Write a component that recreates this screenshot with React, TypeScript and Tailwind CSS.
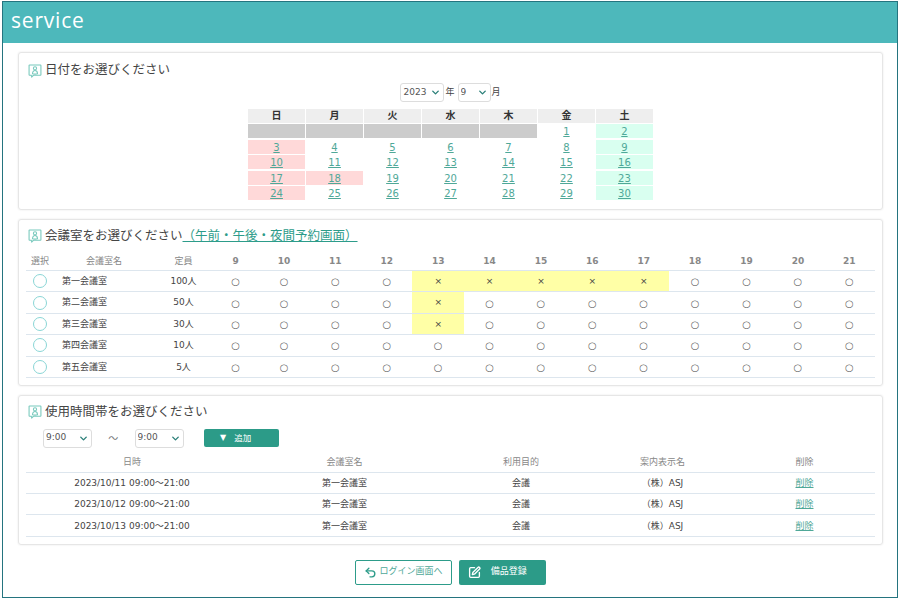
import { ChevronDown, Undo2, SquarePen } from "lucide-react";

const FONT = "font-['DejaVu_Sans','Noto_Sans_CJK_JP',sans-serif]";

const weekdays = ["日", "月", "火", "水", "木", "金", "土"];
const hours = [9, 10, 11, 12, 13, 14, 15, 16, 17, 18, 19, 20, 21];
const rooms = [
    { name: "第一会議室", cap: "100人", busy: [13, 14, 15, 16, 17] },
    { name: "第二会議室", cap: "50人", busy: [13] },
    { name: "第三会議室", cap: "30人", busy: [13] },
    { name: "第四会議室", cap: "10人", busy: [] as number[] },
    { name: "第五会議室", cap: "5人", busy: [] as number[] },
];
const bookings = ["2023/10/11", "2023/10/12", "2023/10/13"];
const holidays = [18];

function TitleIcon() {
    return (
        <svg viewBox="0 0 13 13" className="w-[14px] h-[14px] shrink-0" fill="none" stroke="#79c9bd" strokeWidth="1">
            <path d="M1.5 1h10a.5.5 0 0 1 .5.5v8.5a.5.5 0 0 1-.5.5H5L3.5 12 3 10.500H1.500a.5.5 0 0 1-.5-.5V1.500a.5.5 0 0 1 .5-.5z" />
            <circle cx="6.500" cy="4" r="1.500" />
            <path d="M4.200 9c0-1.800 1-2.900 2.300-2.900S8.800 7.200 8.800 9c-1.500.5-3.100.5-4.600 0z" />
        </svg>
    );
}

function Title({ text, children }: { text: string; children?: React.ReactNode }) {
    return (
        <div className="flex items-center gap-[3px] h-[18px] text-[12.500px] text-[#444]">
            <TitleIcon />
            <span>{text}</span>
            {children}
        </div>
    );
}

function Select({ value, width }: { value: string; width: string }) {
    return (
        <div className={`relative h-[19px] ${width}`}>
            <select className="appearance-none w-full h-full border border-[#ddd] rounded-[3px] bg-white pl-[2px] text-[9px] text-[#555]" defaultValue={value}>
                <option>{value}</option>
            </select>
            <ChevronDown className="absolute right-[3px] top-[4px] w-[11px] h-[11px] text-[#2a7f78] pointer-events-none" strokeWidth={3} />
        </div>
    );
}

function Calendar() {
    const cells: (number | null)[] = [null, null, null, null, null, 1, 2];
    for (let d = 3; d <= 30; d++) cells.push(d);
    return (
        <div className="grid grid-cols-[repeat(7,56.800px)] auto-rows-[14px] gap-x-[1.200px] gap-y-[1.400px] w-fit mx-auto mt-[7px] text-[10px]">
            {weekdays.map((w) => (
                <div key={w} className="bg-[#eee] text-center leading-[14px] font-bold text-[#333]">{w}</div>
            ))}
            {cells.map((d, i) => {
                if (d === null) return <div key={i} className="bg-[#ccc]" />;
                let bg = "";
                if (i % 7 === 0 || holidays.includes(d)) bg = "bg-[#ffd9d9]";
                if (i % 7 === 6) bg = "bg-[#d9fff0]";
                return (
                    <div key={i} className={`text-center leading-[15px] ${bg}`}>
                        <a className="text-[#4fa898] underline">{d}</a>
                    </div>
                );
            })}
        </div>
    );
}

function RoomTable() {
    const grid = "grid grid-cols-[28px_100px_59px_45.300px_repeat(12,51.400px)]";
    return (
        <div className="text-[9px] text-[#444]">
            <div className={`${grid} h-[18px] items-center text-center text-[#888] border-b border-[#dde6ee]`}>
                <div>選択</div>
                <div>会議室名</div>
                <div>定員</div>
                {hours.map((h) => (
                    <div key={h} className="font-bold text-[9px]">{h}</div>
                ))}
            </div>
            {rooms.map((r) => (
                <div key={r.name} className={`${grid} h-[21.400px] items-stretch text-center border-b border-[#dde6ee]`}>
                    <div className="flex items-center justify-center">
                        <span className="w-[14px] h-[14px] rounded-full border border-[#8ad6d6]" />
                    </div>
                    <div className="flex items-center pl-[8px] pt-[1px]">{r.name}</div>
                    <div className="flex items-center justify-center pt-[1px]">{r.cap}</div>
                    {hours.map((h) => (
                        <div key={h} className={`flex items-center justify-center pt-[1px] ${r.busy.includes(h) ? "bg-[#ffffa6]" : ""}`}>
                            <span className={r.busy.includes(h) ? "" : "text-[10px] text-[#555] opacity-90"}>
                                {r.busy.includes(h) ? "×" : "○"}
                            </span>
                        </div>
                    ))}
                </div>
            ))}
        </div>
    );
}

function BookingTable() {
    const grid = "grid grid-cols-[212px_213px_140px_143px_141px]";
    return (
        <div className="text-[9px] text-[#444] mt-[5px]">
            <div className={`${grid} h-[20px] items-center text-center text-[#888] border-b border-[#dde6ee] pt-[2px]`}>
                <div>日時</div>
                <div>会議室名</div>
                <div>利用目的</div>
                <div>案内表示名</div>
                <div>削除</div>
            </div>
            {bookings.map((b) => (
                <div key={b} className={`${grid} h-[21.400px] items-center text-center border-b border-[#dde6ee] pt-[2px]`}>
                    <div>{b} 09:00～21:00</div>
                    <div>第一会議室</div>
                    <div>会議</div>
                    <div>（株）ASJ</div>
                    <div><a className="text-[#4fa898] underline">削除</a></div>
                </div>
            ))}
        </div>
    );
}

export default function App() {
    return (
        <div className={`${FONT} w-[900px] h-[600px] bg-white pl-[2px] pr-[2px] pt-[1px] pb-[2px]`}>
            <div className="h-full border border-[#24747f] flex flex-col">
                <div className="h-[41px] bg-[#4db8bb] text-white flex items-center pl-[8px] pb-[3px] text-[21px] font-medium tracking-[0.800px] font-['Open_Sans',sans-serif]">
                    service
                </div>
                <div className="pl-[15px] pr-[14px] pt-[9px] flex flex-col">
                    <section className="h-[157.500px] border border-[#e6e6e6] rounded-[3px] shadow-[0_0_2px_#e5e5e5] px-[9px] pt-[8.500px]">
                        <Title text="日付をお選びください" />
                        <div className="flex items-center justify-center mt-[3.500px] text-[9px] text-[#444]">
                            <Select value="2023" width="w-[44px]" />
                            <span className="ml-[1px] mr-[3px]">年</span>
                            <Select value="9" width="w-[33px]" />
                            <span className="ml-[1px]">月</span>
                        </div>
                        <Calendar />
                    </section>

                    <section className="h-[166.500px] mt-[9.500px] border border-[#e6e6e6] rounded-[3px] shadow-[0_0_2px_#e5e5e5] pl-[7px] pr-[7px] pt-[7px]">
                        <div className="pl-[2px]">
                            <Title text="会議室をお選びください">
                                <a className="ml-[-3px] text-[#2d9c8a] underline">（午前・午後・夜間予約画面）</a>
                            </Title>
                        </div>
                        <div className="mt-[8px]">
                            <RoomTable />
                        </div>
                    </section>

                    <section className="h-[149.500px] mt-[9.500px] border border-[#e6e6e6] rounded-[3px] shadow-[0_0_2px_#e5e5e5] pl-[7px] pr-[7px] pt-[7px]">
                        <div className="pl-[2px]">
                            <Title text="使用時間帯をお選びください" />
                        </div>
                        <div className="flex items-center mt-[7.500px] pl-[17px] text-[10px] text-[#444]">
                            <Select value="9:00" width="w-[49px]" />
                            <span className="w-[42.500px] text-center text-[#777]">～</span>
                            <Select value="9:00" width="w-[49px]" />
                            <button className="ml-[20.500px] w-[75px] h-[17.500px] bg-[#2c9b88] rounded-[2px] text-white text-[8.500px] flex items-center justify-start pl-[16px] gap-[8px]">
                                <span className="text-[8px]">▼</span>
                                <span>追加</span>
                            </button>
                        </div>
                        <BookingTable />
                    </section>

                    <div className="flex justify-center gap-[6.500px] mt-[15px]">
                        <button className="w-[97.500px] h-[25px] border-[1.500px] border-[#2d9c8a] rounded-[2px] text-[#4fa898] text-[9px] flex items-center justify-center gap-[2px]">
                            <Undo2 className="w-[13px] h-[13px] text-[#2d9c8a]" strokeWidth={2.500} />
                            <span>ログイン画面へ</span>
                        </button>
                        <button className="w-[87.500px] h-[25px] bg-[#2c9b88] rounded-[2px] text-white text-[9px] flex items-center justify-start pl-[9px] gap-[10px]">
                            <SquarePen className="w-[13px] h-[13px]" strokeWidth={2.500} />
                            <span>備品登録</span>
                        </button>
                    </div>
                </div>
            </div>
        </div>
    );
}
